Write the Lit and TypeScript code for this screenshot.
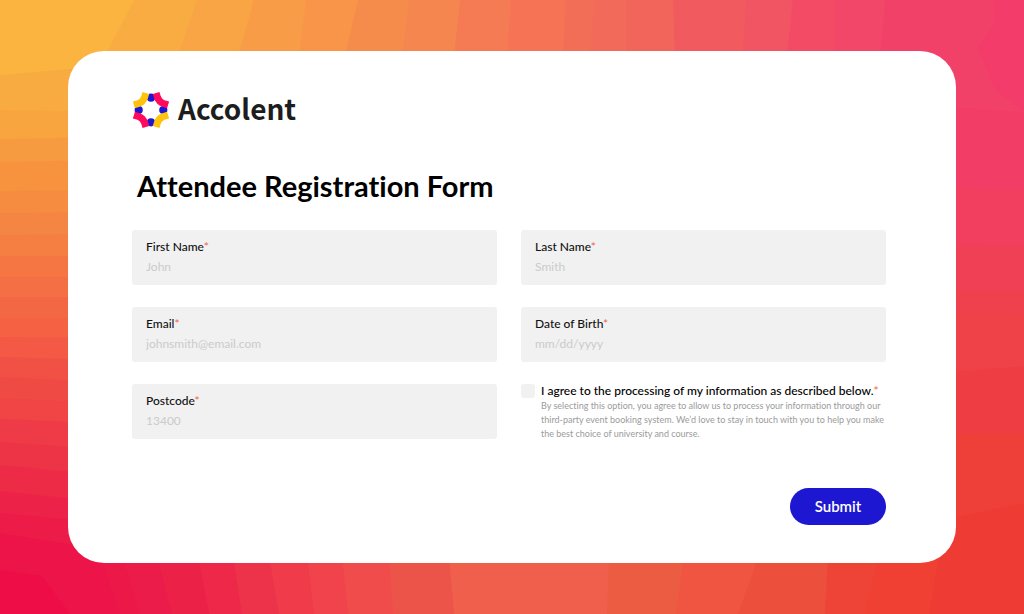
import { LitElement, html, svg, css } from "lit";
import { customElement, property } from "lit/decorators.js";

type Band = [points: number[][], color: string];

/* Colour bands of the backdrop, each running on to the end of its edge. */
const topEdge: [number, number, string][] = [
  [134, 105, "#f9ac42"], [197, 178, "#f9a445"], [254, 238, "#f89c47"], [306, 299, "#f89549"],
  [358, 345, "#f68c4c"], [409, 402, "#f6864f"], [460, 454, "#f57b54"], [511, 507, "#f67356"],
  [566, 563, "#f26e57"], [594, 590, "#f26a59"], [626, 626, "#f2655b"], [673, 675, "#f15a5e"],
  [746, 743, "#f15462"], [793, 787, "#f34a65"], [834, 834, "#f24769"], [885, 880, "#f24169"],
];
const leftEdge: [number, number, string][] = [
  [75, 66, "#f8ab40"], [110, 112, "#f8a43f"], [139, 137, "#f79b40"], [162, 160, "#f7933f"],
  [191, 190, "#f68c3f"], [213, 212, "#f58542"], [235, 234, "#f57e43"], [256, 256, "#f57643"],
  [277, 277, "#f46f43"], [297, 297, "#f46744"], [318, 318, "#f46143"], [337, 338, "#f35945"],
  [357, 360, "#f15145"], [377, 382, "#f04a44"], [398, 403, "#f04445"], [419, 423, "#ef3b47"],
  [442, 449, "#ed3446"], [465, 475, "#ed2b46"], [491, 502, "#ec2248"], [513, 523, "#ed1b48"],
  [533, 550, "#ec1448"],
];
const bottomEdge: [number, number, string][] = [
  [100, 119, "#eb1848"], [122, 140, "#eb1c49"], [157, 172, "#eb2148"], [198, 209, "#ed2849"],
  [233, 242, "#ed334a"], [269, 279, "#ef3b4a"], [307, 314, "#f0434b"], [342, 348, "#f04c4b"],
  [389, 393, "#ec5449"], [449, 454, "#f05f4b"], [609, 607, "#ec5c43"], [684, 676, "#f05541"],
  [759, 738, "#ec4f3c"], [828, 825, "#ee4437"], [878, 865, "#ef4033"], [939, 929, "#ee3c34"],
];
const rightEdge: [number, number, string][] = [
  [187, 190, "#f23f5f"], [243, 246, "#f04055"], [290, 290, "#ef404e"], [311, 314, "#ee4248"],
  [375, 366, "#ee3e43"], [435, 433, "#ee3f39"], [525, 503, "#ee3c34"],
];

const bands: Band[] = [
  ...topEdge.map(([a, b, c]): Band => [[[a, 0], [1024, 0], [1024, 56], [b, 56]], c]),
  ...leftEdge.map(([a, b, c]): Band => [[[0, a], [104, b], [104, 614], [0, 614]], c]),
  [[[104, 556], [1024, 556], [1024, 614], [104, 614]], "#ec1448"],
  [[[0, 570], [42, 576], [70, 614], [0, 614]], "#ee0d47"],
  ...bottomEdge.map(([a, b, c]): Band => [[[a, 556], [1024, 556], [1024, 614], [b, 614]], c]),
  [[[920, 50], [1024, 50], [1024, 556], [920, 556]], "#f24169"],
  [[[993, 0], [1024, 0], [1024, 112], [996, 92], [977, 47], [995, 23]], "#f33c69"],
  [[[920, 105], [1024, 112], [1024, 200], [920, 200]], "#f23e66"],
  ...rightEdge.map(([a, b, c]): Band => [[[920, a], [1024, b], [1024, 556], [920, 556]], c]),
];

@customElement("color-backdrop")
export class ColorBackdrop extends LitElement {
  static styles = css`
    :host { display: grid; }
    .art { width: 100%; height: 100%; display: block; }
  `;
  render() {
    return html`<svg class="art" viewBox="0 0 1024 614" preserveAspectRatio="none" aria-hidden="true">
      <rect width="1024" height="614" fill="#fbb440" />
      ${bands.map(([p, c]) => svg`<polygon points=${p.map((q) => q.join(",")).join(" ")} fill=${c} />`)}
    </svg>`;
  }
}

@customElement("form-field")
export class FormField extends LitElement {
  @property() label = "";
  @property() placeholder = "";
  @property() type = "text";
  static styles = css`
    :host { display: block; }
    .field {
      display: flex; flex-direction: column; gap: 4px;
      box-sizing: border-box; min-height: 55px; padding: 9px 14px 10px;
      background: #f1f1f1; border-radius: 3px;
    }
    .label { font-size: 12px; line-height: 16px; font-weight: 500; color: #111; }
    .star { color: #f4694f; }
    .input {
      border: 0; padding: 0; margin: 0; width: 100%; height: 16px; background: none; outline: none;
      font: 12px/16px var(--font); color: #111;
    }
    .input::placeholder { color: #cbcbcb; opacity: 1; }
  `;
  render() {
    return html`<div class="field">
      <label class="label" for="control">${this.label}<span class="star">*</span></label>
      <input class="input" id="control" type=${this.type} placeholder=${this.placeholder} required />
    </div>`;
  }
}

@customElement("app-root")
export class AppRoot extends LitElement {
  static styles = css`
    :host {
      --font: Lato, "Open Sans", sans-serif;
      display: grid; min-height: 100vh; font-family: var(--font); color: #000;
      font-variant-ligatures: none;
    }
    .backdrop, .page { grid-area: 1 / 1; }
    .page { display: grid; padding: 51px 68px; box-sizing: border-box; }
    .card {
      display: flex; flex-direction: column; box-sizing: border-box;
      padding: 40px 70px 38px 64px; background: #fff; border-radius: 36px;
    }
    .brand { display: flex; align-items: flex-start; gap: 8px; height: 38px; }
    .mark { width: 38px; height: 38px; flex: none; }
    .name { font: 700 28px/34px "Noto Sans CJK SC", "Noto Sans", sans-serif; color: #1d1d1d; }
    .title { margin: 39px 0 0 5px; font-size: 29px; line-height: 36px; font-weight: 700; }
    .grid { display: grid; grid-template-columns: 1fr 1fr; gap: 22px 24px; margin-top: 26px; }
    .consent { display: grid; grid-template-columns: 14px 1fr; column-gap: 6px; align-content: start; }
    .tick { appearance: none; margin: 0; width: 14px; height: 14px; background: #f1f1f1; border-radius: 3px; }
    .tick:checked { background: #1e17d1; }
    .agree { font-size: 12px; line-height: 14px; font-weight: 500; white-space: nowrap; }
    .star { color: #f4694f; }
    .note { grid-column: 2; margin: 1px 0 0; font-size: 9px; line-height: 14px; color: #9b9b9b; }
    .line { display: block; white-space: nowrap; }
    .submit {
      align-self: flex-end; margin-top: auto; border: 0; padding: 0 24px 2px; height: 37px; min-width: 96px;
      border-radius: 19px; background: #1e17d1; color: #fff; font: 600 15px/20px var(--font);
    }
  `;
  render() {
    return html`
      <color-backdrop class="backdrop"></color-backdrop>
      <main class="page">
        <form class="card" @submit=${(e: Event) => e.preventDefault()}>
          <div class="brand">
            <svg class="mark" viewBox="-0.5 -0.5 38 38" aria-hidden="true">
              <g fill="#1e17d1">
                <circle cx="18.5" cy="6.2" r="4.1" /><circle cx="18.5" cy="30.8" r="4.1" />
                <circle cx="6.2" cy="18.5" r="4.1" /><circle cx="30.8" cy="18.5" r="4.1" />
              </g>
              <g fill="none" stroke-width="7">
                <path stroke="#ffc20d" d="M13.4 1.4L12 6Q10.4 10.4 6 12L1.4 13.4" />
                <path stroke="#ff0a5c" d="M23.6 1.4L25 6Q26.6 10.4 31 12L35.6 13.4" />
                <path stroke="#ff0a5c" d="M13.4 35.6L12 31Q10.4 26.6 6 25L1.4 23.6" />
                <path stroke="#ffc20d" d="M23.6 35.6L25 31Q26.6 26.6 31 25L35.6 23.6" />
              </g>
            </svg>
            <span class="name">Accolent</span>
          </div>
          <h1 class="title">Attendee Registration Form</h1>
          <div class="grid">
            <form-field label="First Name" placeholder="John"></form-field>
            <form-field label="Last Name" placeholder="Smith"></form-field>
            <form-field label="Email" type="email" placeholder="johnsmith@email.com"></form-field>
            <form-field label="Date of Birth" placeholder="mm/dd/yyyy"></form-field>
            <form-field label="Postcode" placeholder="13400"></form-field>
            <div class="consent">
              <input class="tick" id="agree" type="checkbox" aria-describedby="note" required />
              <label class="agree" for="agree">I agree to the processing of my information as described below.<span class="star">*</span></label>
              <p class="note" id="note">
                <span class="line">By selecting this option, you agree to allow us to process your information through our</span>
                <span class="line">third-party event booking system. We’d love to stay in touch with you to help you make</span>
                <span class="line">the best choice of university and course.</span>
              </p>
            </div>
          </div>
          <button class="submit" type="submit">Submit</button>
        </form>
      </main>
    `;
  }
}
